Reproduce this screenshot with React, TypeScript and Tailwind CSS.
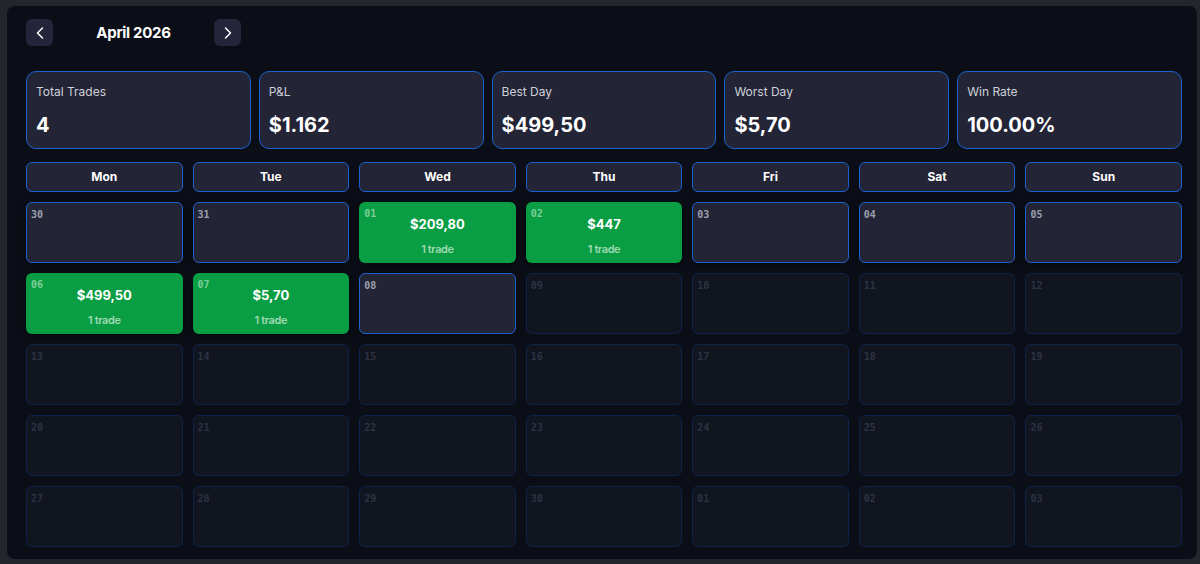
import React from "react";
import { ChevronLeft, ChevronRight } from "lucide-react";

type Day = {
  label: string;
  state: "active" | "future";
  pnl?: string;
  trades?: number;
};

const stats = [
  { title: "Total Trades", value: "4" },
  { title: "P&L", value: "$1.162" },
  { title: "Best Day", value: "$499,50" },
  { title: "Worst Day", value: "$5,70" },
  { title: "Win Rate", value: "100.00%" },
];

const weekdays = ["Mon", "Tue", "Wed", "Thu", "Fri", "Sat", "Sun"];

const pnlByDay: Record<string, string> = {
  "01": "$209,80",
  "02": "$447",
  "06": "$499,50",
  "07": "$5,70",
};

const labels = [
  "30", "31", "01", "02", "03", "04", "05",
  "06", "07", "08", "09", "10", "11", "12",
  "13", "14", "15", "16", "17", "18", "19",
  "20", "21", "22", "23", "24", "25", "26",
  "27", "28", "29", "30", "01", "02", "03",
];

// everything up to the 8th counts as "this month so far"
const days: Day[] = labels.map((label, i) => ({
  label,
  state: i <= 9 ? "active" : "future",
  pnl: i <= 9 ? pnlByDay[label] : undefined,
  trades: i <= 9 && pnlByDay[label] ? 1 : undefined,
}));

const DayCell = ({ day }: { day: Day }) => {
  if (day.pnl) {
    return (
      <div className="relative flex h-[61px] flex-col items-center rounded-md bg-[#0a9e44] pt-[12px] shadow-[0_2px_8px_rgba(0,0,0,0.45)]">
        <span className="absolute top-[6px] left-[5px] font-['DejaVu_Sans_Mono',monospace] text-[10px] leading-[12px] font-bold text-[#7ccf98]">
          {day.label}
        </span>
        <span className="text-[13px] leading-5 font-bold text-white">{day.pnl}</span>
        <span className="mt-[7px] text-[11px] leading-4 font-semibold tracking-[-0.4px] text-[#9ed9b1]">
          {day.trades} trade
        </span>
      </div>
    );
  }

  const active = day.state === "active";
  return (
    <div
      className={
        active
          ? "relative h-[61px] rounded-md border border-[#1a62cf] bg-[#232436] shadow-[0_2px_8px_rgba(0,0,0,0.35)]"
          : "relative h-[61px] rounded-md border border-[#0d2349] bg-[#111520]"
      }
    >
      <span
        className={
          active
            ? "absolute top-[6px] left-[4px] font-['DejaVu_Sans_Mono',monospace] text-[10px] leading-[12px] font-bold text-[#9ca1ae]"
            : "absolute top-[6px] left-[4px] font-['DejaVu_Sans_Mono',monospace] text-[10px] leading-[12px] font-bold text-[#2e3342]"
        }
      >
        {day.label}
      </span>
    </div>
  );
};

export default function App() {
  return (
    <div className="h-[564px] w-[1200px] overflow-hidden bg-[#23262c] pt-[6px] pl-[7px] pr-[3px] font-['Inter',sans-serif]">
      <div className="h-[553px] rounded-lg bg-[#0b0e16] pt-[13px] pr-[15px] pl-[19px]">
        <div className="flex items-center">
          <button className="flex h-[27px] w-[27px] items-center justify-center rounded-md bg-[#24253a] text-white">
            <ChevronLeft size={20} strokeWidth={1.8} />
          </button>
          <h2 className="w-[161px] text-center text-[15px] leading-6 font-bold tracking-[-0.3px] text-white">
            April 2026
          </h2>
          <button className="flex h-[27px] w-[27px] items-center justify-center rounded-md bg-[#24253a] text-white">
            <ChevronRight size={20} strokeWidth={1.8} />
          </button>
        </div>

        <div className="mt-[25px] grid grid-cols-5 gap-2">
          {stats.map((s) => (
            <div
              key={s.title}
              className="h-[78px] rounded-[10px] border border-[#1a62cf] bg-[#232436] px-[9px] pt-[12px]"
            >
              <p className="text-xs leading-4 text-[#cdd0d8]">{s.title}</p>
              <p className="mt-[11px] text-xl leading-7 font-bold text-white">{s.value}</p>
            </div>
          ))}
        </div>

        <div className="mt-[13px] grid grid-cols-7 gap-[10px]">
          {weekdays.map((d) => (
            <div
              key={d}
              className="flex h-[30px] items-center justify-center rounded-md border border-[#1a62cf] bg-[#232436] text-xs font-bold text-white"
            >
              {d}
            </div>
          ))}
          {days.map((day, i) => (
            <DayCell key={i} day={day} />
          ))}
        </div>
      </div>
    </div>
  );
}
